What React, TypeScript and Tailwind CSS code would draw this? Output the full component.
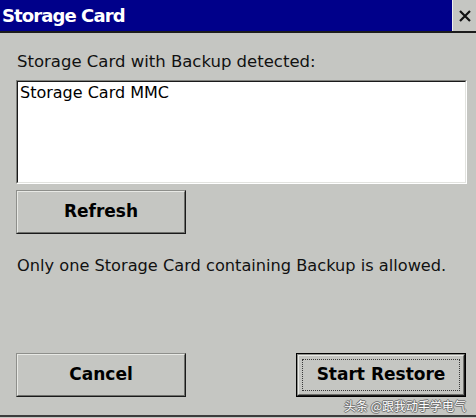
import React from "react";

const font = { fontFamily: '"DejaVu Sans", "Noto Sans CJK SC", sans-serif' };

function Btn({
  children,
  def = false,
  cls = "",
}: {
  children: React.ReactNode;
  def?: boolean;
  cls?: string;
}) {
  const inner = (
    <div className="flex-1 border border-t-[#8e8f8b] border-l-[#8e8f8b] border-b-[#1a1a1a] border-r-[#1a1a1a] flex">
      <div className="flex-1 border border-t-[#e8e9e5] border-l-[#e8e9e5] border-b-[#6f706c] border-r-[#6f706c] flex p-[3px]">
        <div
          className={
            "flex-1 flex items-center justify-center font-bold text-black " +
            (def ? "border border-dotted border-[#3a3a3a]" : "border border-transparent")
          }
        >
          {children}
        </div>
      </div>
    </div>
  );
  if (def) {
    return <div className={"flex border border-black " + cls}>{inner}</div>;
  }
  return <div className={"flex " + cls}>{inner}</div>;
}

export default function App() {
  return (
    <div
      className="w-[476px] h-[418px] bg-[#c5c6c2] flex flex-col overflow-hidden relative"
      style={font}
    >
      <div className="h-[31px] bg-[#00008a] flex items-stretch shrink-0">
        <div className="flex-1 text-white font-bold text-[18px] leading-[31px] pl-[2px] tracking-[-0.9px]">
          Storage Card
        </div>
        <div className="w-[24px] bg-[#c5c6c2] border-l border-l-[#eeeeee] flex items-center justify-center">
          <svg width="14" height="14" viewBox="0 0 14 14">
            <path d="M2 2 L12 12 M12 2 L2 12" stroke="#111" strokeWidth="2.2" />
          </svg>
        </div>
      </div>
      <div className="h-[2px] bg-[#1c1c1c] shrink-0" />
      <div className="flex-1 flex flex-col pl-[16px] pr-[9px]">
        <div className="text-[16.5px] leading-[19px] text-[#111] mt-[19px] pl-[1px]">
          Storage Card with Backup detected:
        </div>
        <div className="mt-[9px] h-[104px] w-[451px] border border-t-[#80817d] border-l-[#80817d] border-b-[#ffffff] border-r-[#ffffff] flex">
          <div className="flex-1 border border-t-[#1a1a1a] border-l-[#1a1a1a] border-b-[#e2e3df] border-r-[#e2e3df] bg-white">
            <div className="text-[16px] leading-[19px] text-black pl-[2px] pt-[1px]">
              Storage Card MMC
            </div>
          </div>
        </div>
        <Btn cls="mt-[6px] w-[170px] h-[44px] text-[17px]">Refresh</Btn>
        <div className="text-[16.2px] leading-[19px] text-[#111] mt-[22px] pl-[1px]">
          Only one Storage Card containing Backup is allowed.
        </div>
        <div className="mt-auto mb-[18px] flex justify-between pr-[1px]">
          <Btn cls="w-[170px] h-[44px] text-[17px]">Cancel</Btn>
          <Btn def cls="w-[170px] h-[44px] text-[17px]">Start Restore</Btn>
        </div>
      </div>
      <div className="h-[2px] bg-[#3c3c3c] shrink-0 mb-[1px]" />
      <div
        className="absolute right-[10px] bottom-[5px] text-[12px] leading-[15px] text-white"
        style={{
          fontFamily: '"Noto Sans CJK SC", sans-serif',
          textShadow:
            "0 0 1px #555, 1px 0 0 #777, -1px 0 0 #777, 0 1px 0 #777, 0 -1px 0 #777",
        }}
      >
        头条 @跟我动手学电气
      </div>
    </div>
  );
}
